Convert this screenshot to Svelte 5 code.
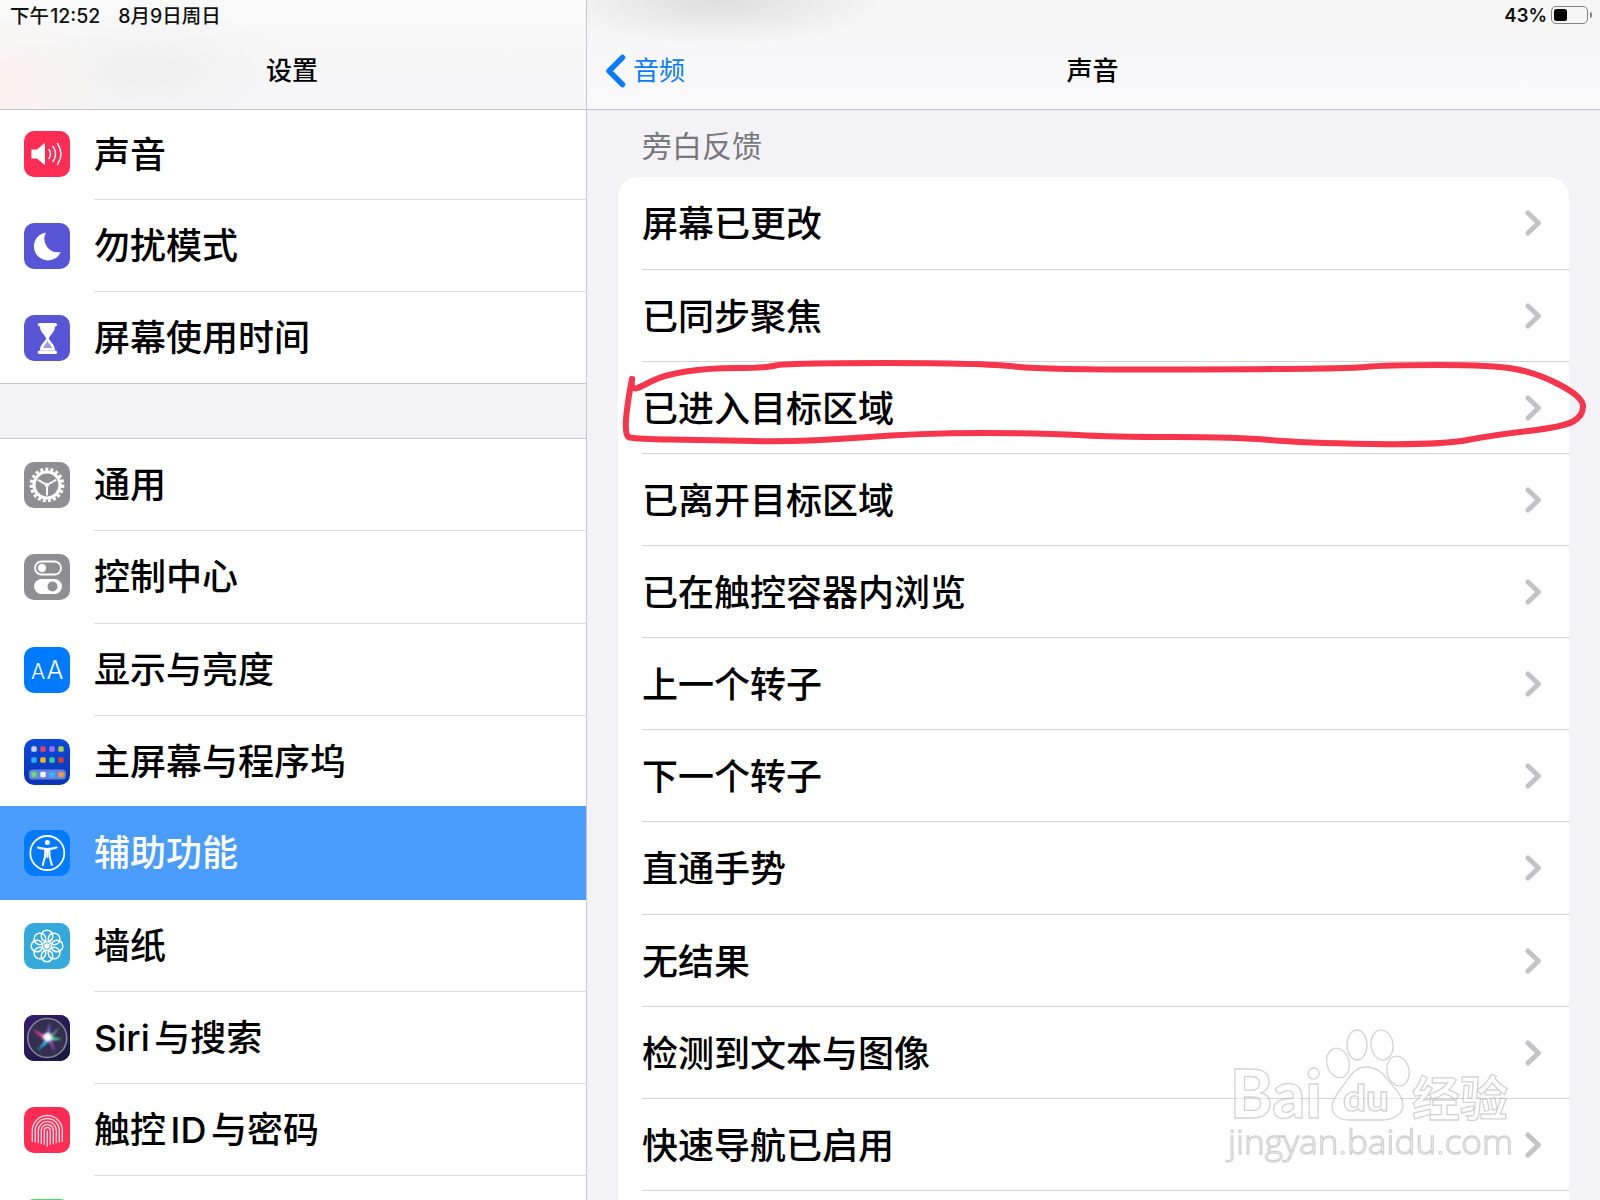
<script>
  const topRows = [
    { icon: 'sound', label: '声音' },
    { icon: 'moon', label: '勿扰模式' },
    { icon: 'hourglass', label: '屏幕使用时间' }
  ]
  const mainRows = [
    { icon: 'gear', label: '通用' },
    { icon: 'toggles', label: '控制中心' },
    { icon: 'display', label: '显示与亮度' },
    { icon: 'home', label: '主屏幕与程序坞' },
    { icon: 'access', label: '辅助功能', active: true },
    { icon: 'flower', label: '墙纸' },
    { icon: 'siri', label: 'Siri 与搜索' },
    { icon: 'touch', label: '触控 ID 与密码' },
    { icon: 'battery', label: '' }
  ]
  const feedback = [
    '屏幕已更改', '已同步聚焦', '已进入目标区域', '已离开目标区域', '已在触控容器内浏览',
    '上一个转子', '下一个转子', '直通手势', '无结果', '检测到文本与图像', '快速导航已启用', ''
  ]

  const homeDots = [
    [10, 10, '#c9d2e6'], [19, 10, '#e0455a'], [28, 10, '#a56cf0'], [37, 10, '#a8cf45'],
    [10, 21, '#2bb2f5'], [19, 21, '#f2b81f'], [28, 21, '#2ecf9e'], [37, 21, '#e03a3a'],
    [10, 35.5, '#6fd86f'], [19, 35.5, '#f2f2f2'], [28, 35.5, '#35b5f5'], [37, 35.5, '#f29a45']
  ]
  const petals = [0, 45, 90, 135, 180, 225, 270, 315]
  const arches = [3, 6, 9, 12, 15]

  // hand drawn red circle round the third row, traced from the screenshot
  const scribble = [
    [632, 379], [621, 436], [638, 439], [702, 440], [804, 442], [919, 433], [1046, 433], [1110, 437],
    [1238, 437], [1301, 443], [1442, 445], [1493, 435], [1563, 427], [1583, 416], [1583, 397], [1537, 373],
    [1493, 365], [1384, 365], [1346, 369], [1046, 370], [983, 363], [785, 363], [766, 368], [708, 368],
    [664, 375], [640, 387]
  ]
  function smooth(pts) {
    let d = `M${pts[0][0]} ${pts[0][1]}`
    for (let i = 1; i < pts.length - 1; i++) {
      const mx = (pts[i][0] + pts[i + 1][0]) / 2
      const my = (pts[i][1] + pts[i + 1][1]) / 2
      d += ` Q${pts[i][0]} ${pts[i][1]} ${mx} ${my}`
    }
    const last = pts[pts.length - 1]
    return d + ` L${last[0]} ${last[1]}`
  }
</script>

{#snippet chevron()}
  <svg class="chevron" viewBox="0 0 17 26" width="17" height="26">
    <path d="M3 3 L13.5 13 L3 23" />
  </svg>
{/snippet}

{#snippet appIcon(name)}
  <svg class="icon {name}" viewBox="0 0 46 46" width="46" height="46">
    {#if name === 'sound'}
      <path fill="#fff" d="M8 18.5h5l7-6q1-.6 1 .6v19.8q0 1.2-1 .6l-7-6H8q-.6 0-.6-.6v-7.8q0-.6.6-.6z" />
      <g fill="none" stroke="#fff" stroke-width="1.5" stroke-linecap="round">
        <path d="M25 18.5q3 4.5 0 9" />
        <path d="M29 15.5q5 7.5 0 15" />
        <path d="M33.5 12.5q7 10.5 0 21" />
      </g>
    {:else if name === 'moon'}
      <path fill="#fff" d="M22 9.5A14 14 0 1 0 36.7 29 A13.5 13.5 0 0 1 22 9.5z" />
    {:else if name === 'hourglass'}
      <rect x="13.8" y="8" width="19.2" height="3.4" rx="1.6" fill="#fff" />
      <rect x="13.8" y="35.6" width="19.2" height="3.4" rx="1.6" fill="#fff" />
      <path fill="#fff" d="M16 11h15c0 7-5.5 9-6 12.5c.5 3.5 6 5 6 12H16c0-7 5.5-8.5 6-12C21.5 20 16 18 16 11z" />
      <path fill="#5856d6" d="M19 33c1-3 3.5-4 4.500-7.500c1 3.500 3.500 4.500 4.500 7.500z" opacity=".6" />
    {:else if name === 'gear'}
      <circle cx="23" cy="23" r="15.6" fill="none" stroke="#fff" stroke-width="3.6" stroke-dasharray="3 2.1" />
      <circle cx="23" cy="23" r="13" fill="none" stroke="#fff" stroke-width="3.2" />
      <path d="M23 23V33.500M23 23L13.900 17.800M23 23L32.100 17.800" stroke="#fff" stroke-width="2" />
      <circle cx="23" cy="23" r="2.2" fill="#fff" />
    {:else if name === 'toggles'}
      <rect x="11" y="7.5" width="26" height="13" rx="6.5" fill="none" stroke="#fff" stroke-width="1.8" />
      <circle cx="18" cy="14" r="4.2" fill="#fff" />
      <rect x="10" y="25" width="28" height="15" rx="7.5" fill="#fff" />
      <circle cx="28.5" cy="32.5" r="5" fill="#8e8e93" />
    {:else if name === 'display'}
      <text class="aa" x="7" y="32" font-size="21">A</text>
      <text class="aa" x="22.5" y="32" font-size="25">A</text>
    {:else if name === 'home'}
      <rect x="5" y="30.5" width="37" height="10" rx="3.5" fill="#8aa4ec" opacity=".7" />
      {#each homeDots as [x, y, fill]}
        <rect x={x - 2.7} y={y - 2.7} width="5.4" height="5.4" rx="1.5" {fill} />
      {/each}
    {:else if name === 'access'}
      <circle cx="23.3" cy="23" r="17" fill="none" stroke="#fff" stroke-width="1.8" />
      <circle cx="23.3" cy="12.5" r="2.5" fill="#fff" />
      <path d="M14 17.500Q23.300 20.500 32.600 17.500" fill="none" stroke="#fff" stroke-width="2" stroke-linecap="round" />
      <path d="M21.300 19.500h4l.3 7 2.200 8.500M21.300 19.500l-.3 7-2.200 8.500M23.300 27v-7" fill="none" stroke="#fff" stroke-width="2" stroke-linecap="round" />
    {:else if name === 'flower'}
      {#each petals as a}
        <circle cx="23" cy="13" r="5.8" fill="none" stroke="#fff" stroke-width="1.5" transform="rotate({a} 23 23)" />
      {/each}
      <circle cx="23" cy="23" r="2.8" fill="#fff" />
    {:else if name === 'siri'}
      <defs>
        <linearGradient id="siriBg" x1="0" y1="0" x2="1" y2="1">
          <stop offset="0" stop-color="#3a1c6e" />
          <stop offset="1" stop-color="#141a3c" />
        </linearGradient>
        <filter id="siriBlur" x="-30%" y="-30%" width="160%" height="160%">
          <feGaussianBlur stdDeviation="1.1" />
        </filter>
      </defs>
      <rect width="46" height="46" fill="url(#siriBg)" />
      <circle cx="23.3" cy="23" r="19.5" fill="#33304f" stroke="#85859a" stroke-width="1.6" />
      <g filter="url(#siriBlur)">
        <path d="M23 21L8 14L20 25z" fill="#e0429a" />
        <path d="M24 21L38 24L25 26z" fill="#4fe6a8" />
        <path d="M22 24L13 36L25 27z" fill="#2fb8f0" />
        <path d="M24 24L31 38L27 23z" fill="#c64fd8" />
        <path d="M21 23L26 7L26 23z" fill="#7a68d8" />
        <path d="M21 25L36 12L26 25z" fill="#8fe8c8" opacity=".7" />
        <circle cx="23.5" cy="22" r="4" fill="#fff" />
      </g>
    {:else if name === 'touch'}
      <g fill="none" stroke="#ffd3dc" stroke-width="1.4" stroke-linecap="round">
        {#each arches as r}
          <path d="M{23.3 - r} {38 - r / 4}V23.5a{r} {r} 0 0 1 {r * 2} 0V{38 - r / 4}" />
        {/each}
        <path d="M23.3 24V39" />
      </g>
    {/if}
  </svg>
{/snippet}

{#snippet sideRow(row)}
  <li class="side-row" class:active={row.active}>
    <span class="icon-box"><span class="tile {row.icon}-tile">{@render appIcon(row.icon)}</span></span>
    <span class="side-label">{row.label}</span>
  </li>
{/snippet}

<div class="screen">
  <aside class="sidebar">
    <header class="bar side-bar">
      <div class="status">
        <span class="clock">下午 12:52</span>
        <span>8月9日周日</span>
      </div>
      <h1>设置</h1>
    </header>
    <ul class="group first">
      {#each topRows as row}
        {@render sideRow(row)}
      {/each}
    </ul>
    <ul class="group second">
      {#each mainRows as row}
        {@render sideRow(row)}
      {/each}
    </ul>
  </aside>

  <main class="detail">
    <header class="bar detail-bar">
      <div class="status right">
        <span class="percent">43%</span>
        <span class="batt"><span class="batt-fill"></span></span>
        <span class="batt-cap"></span>
      </div>
      <div class="nav">
        <span class="back">
          <svg viewBox="0 0 21 34" width="21" height="34"><path d="M17.5 3.5 L4 17 L17.5 30.5" /></svg>
          音频
        </span>
        <h1>声音</h1>
      </div>
    </header>
    <div class="section-title">旁白反馈</div>
    <ul class="card">
      {#each feedback as item}
        <li class="card-row">
          <div class="card-inner">
            <span class="card-label">{item}</span>
            {@render chevron()}
          </div>
        </li>
      {/each}
    </ul>
  </main>

  <svg class="scribble" viewBox="0 0 1600 1200" width="1600" height="1200">
    <path d={smooth(scribble)} />
    <path d="M640 387Q630 392 632 379" />
  </svg>

  <svg class="watermark" viewBox="0 0 1600 1200" width="1600" height="1200">
    <ellipse cx="1338" cy="1063" rx="11" ry="15" transform="rotate(-15 1338 1063)" />
    <ellipse cx="1357" cy="1045" rx="10" ry="15" />
    <ellipse cx="1382" cy="1045" rx="11" ry="15" transform="rotate(-8 1382 1045)" />
    <ellipse cx="1398" cy="1071" rx="11" ry="15" transform="rotate(-12 1398 1071)" />
    <path d="M1366 1067c-12 0-16 10-24 20c-6 8-10 14-10 19c0 10 8 14 18 14h32c10 0 21-5 21-15c0-8-6-14-11-20c-7-9-13-18-26-18z" />
    <text class="wm-big" x="1230" y="1118" font-size="66" textLength="92" lengthAdjust="spacingAndGlyphs">Bai</text>
    <text class="wm-mid" x="1343" y="1111" font-size="36" textLength="46" lengthAdjust="spacingAndGlyphs">du</text>
    <text class="wm-cjk" x="1412" y="1116" font-size="48">经验</text>
    <text class="wm-url" x="1228" y="1154" font-size="33" textLength="285" lengthAdjust="spacingAndGlyphs">jingyan.baidu.com</text>
  </svg>
</div>

<style>
  :global(body) {
    margin: 0;
    background: #f2f2f7;
  }
  ul {
    list-style: none;
    margin: 0;
    padding: 0;
  }
  .screen {
    position: relative;
    display: flex;
    width: 1600px;
    height: 1200px;
    overflow: hidden;
    background: #f2f2f7;
    color: #000;
    font-family: Inter, "Noto Sans CJK SC", sans-serif;
  }
  .sidebar {
    width: 587px;
    flex: none;
    box-sizing: border-box;
    border-right: 1px solid #c8c8cd;
    background: #f2f2f7;
  }
  .detail {
    flex: 1;
    min-width: 0;
  }
  .bar {
    box-sizing: border-box;
    height: 110px;
    border-bottom: 1px solid #c3c3c7;
    background: #f7f7f9;
  }
  .side-bar {
    background:
      radial-gradient(ellipse 110px 70px at 0 85px, #fbf0ed 0, rgba(251, 240, 237, 0) 100%),
      radial-gradient(ellipse 150px 60px at 150px 70px, #efeff0 0, rgba(239, 239, 240, 0) 100%),
      linear-gradient(#f9f9f9, #f6f6f8);
  }
  .detail-bar {
    background:
      radial-gradient(ellipse 170px 45px at 130px 0, #dedede 0, rgba(222, 222, 222, 0) 100%),
      linear-gradient(#f6f6f7, #f9f9fb);
  }
  .status {
    display: flex;
    align-items: center;
    gap: 18px;
    box-sizing: border-box;
    height: 30px;
    padding-left: 10px;
    font-size: 19.5px;
    font-weight: 500;
    color: #111;
  }
  .side-bar .status {
    padding-bottom: 2px;
  }
  .status.right {
    justify-content: flex-end;
    gap: 0;
    padding: 0 8px 0 0;
    font-size: 18.5px;
    font-weight: 600;
  }
  .clock {
    word-spacing: -4px;
  }
  .percent {
    margin-right: 4px;
  }
  .batt {
    box-sizing: border-box;
    width: 37px;
    height: 18px;
    padding: 2px;
    border: 1.5px solid #858588;
    border-radius: 5px;
  }
  .batt-fill {
    display: block;
    width: 13px;
    height: 100%;
    border-radius: 2.5px;
    background: #000;
  }
  .batt-cap {
    width: 2px;
    height: 6px;
    margin-left: 2px;
    border-radius: 0 2px 2px 0;
    background: #858588;
  }
  h1 {
    margin: 0;
    padding-right: 2px;
    font-size: 26px;
    line-height: 82px;
    font-weight: 500;
    text-align: center;
    height: 79px;
  }
  .nav {
    position: relative;
  }
  .back {
    position: absolute;
    left: 18px;
    top: 23px;
    display: flex;
    align-items: center;
    gap: 7px;
    font-size: 26px;
    line-height: 36px;
    color: #0a7aff;
  }
  .back svg {
    margin-top: -1px;
  }
  .back path {
    fill: none;
    stroke: #0a7aff;
    stroke-width: 5.5;
    stroke-linecap: round;
    stroke-linejoin: round;
  }
  .group {
    background: #fff;
  }
  .first {
    border-bottom: 1px solid #c8c8cd;
    margin-bottom: 54px;
  }
  .second {
    border-top: 1px solid #c8c8cd;
  }
  .side-row {
    display: flex;
    height: 92.14px;
    box-sizing: border-box;
    font-size: 36px;
    font-weight: 500;
    word-spacing: -5px;
  }
  .first .side-row:first-child {
    height: 90px;
  }
  .first .side-row:first-child .icon-box {
    padding-bottom: 3px;
  }
  .first .side-row:last-child {
    height: 91.14px;
  }
  .first .side-row:last-child .side-label {
    border-bottom: 0;
  }
  .side-row:has(+ .active) .side-label {
    border-bottom: 0;
  }
  .icon-box {
    flex: none;
    width: 94px;
    display: flex;
    align-items: center;
    padding-left: 24px;
    box-sizing: border-box;
  }
  .tile {
    display: block;
    width: 46px;
    height: 46px;
    border-radius: 10px;
    overflow: hidden;
    background: #8e8e93;
  }
  .tile svg {
    display: block;
  }
  .sound-tile, .touch-tile {
    background: #ff2d55;
  }
  .moon-tile, .hourglass-tile {
    background: #5856d6;
  }
  .display-tile, .access-tile {
    background: #007aff;
  }
  .home-tile {
    background: linear-gradient(#0d49dc, #0a34b4);
  }
  .flower-tile {
    background: #36a9dc;
  }
  .siri-tile {
    background: #1c1a44;
  }
  .battery-tile {
    background: #4cd964;
  }
  .aa {
    fill: #fff;
    font-family: Inter, sans-serif;
    font-weight: 300;
  }
  .side-label {
    flex: 1;
    display: flex;
    align-items: center;
    padding-bottom: 5px;
    box-sizing: border-box;
    border-bottom: 1px solid #dcdce0;
  }
  .side-row.active {
    height: 94.14px;
    margin-top: -2px;
    background: #4a9dfc;
    color: #fff;
  }
  .side-row.active .side-label {
    border-bottom: 0;
  }
  .section-title {
    box-sizing: border-box;
    height: 67px;
    padding-left: 55px;
    font-size: 30px;
    line-height: 72px;
    color: #77777c;
  }
  .card {
    margin: 0 31px;
    background: #fff;
    border-radius: 20px 20px 0 0;
  }
  .card-row {
    box-sizing: border-box;
    height: 92.14px;
    padding-left: 24px;
    font-size: 36px;
    font-weight: 500;
  }
  .card-row:first-child {
    height: 92.64px;
  }
  .card-inner {
    box-sizing: border-box;
    height: 100%;
    display: flex;
    align-items: center;
    justify-content: space-between;
    padding-right: 27px;
    border-bottom: 1px solid #d4d4d8;
  }
  .card-label {
    margin-top: -3px;
  }
  .chevron {
    margin-top: 1px;
  }
  .chevron path {
    fill: none;
    stroke: #c4c4c7;
    stroke-width: 5;
    stroke-linecap: round;
    stroke-linejoin: round;
  }
  .scribble, .watermark {
    position: absolute;
    left: 0;
    top: 0;
    pointer-events: none;
  }
  .scribble path {
    fill: none;
    stroke: #f5364c;
    stroke-width: 6;
    stroke-linecap: round;
    stroke-linejoin: round;
  }
  .watermark {
    filter: blur(0.4px);
  }
  .watermark ellipse, .watermark path, .watermark text {
    fill: rgba(255, 255, 255, 0.55);
    stroke: rgba(110, 110, 110, 0.3);
    stroke-width: 1.3;
  }
  .wm-big, .wm-mid {
    font-family: Lato, sans-serif;
    font-weight: 900;
  }
  .wm-cjk {
    font-family: "Noto Sans CJK SC", sans-serif;
    font-weight: 700;
  }
  .wm-url {
    font-family: "Open Sans", sans-serif;
    font-weight: 300;
  }
</style>
